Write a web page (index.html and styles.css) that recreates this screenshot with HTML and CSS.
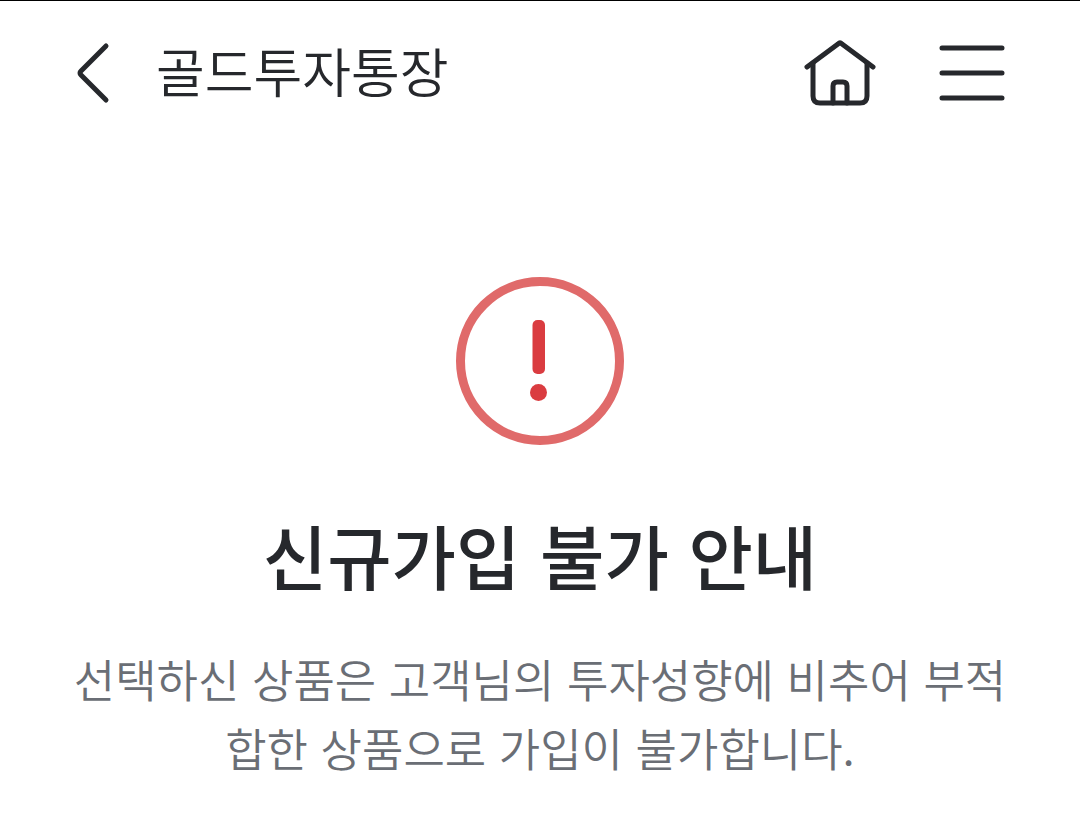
FILE: index.html
```html
<!DOCTYPE html>
<html lang="ko">
<head>
  <meta charset="UTF-8">
  <meta name="viewport" content="width=device-width, initial-scale=1.0">
  <title>골드투자통장</title>
  <link rel="stylesheet" href="styles.css">
</head>
<body>
  <!-- Top bar -->
  <header class="header">
    <button type="button" class="icon-btn back-btn" aria-label="이전">
      <svg width="32" height="60" viewBox="0 0 32 60"><path d="M30 3 L5 28 Q3 30 5 32 L30 57"/></svg>
    </button>
    <h1 class="header-title">골드투자통장</h1>
    <a href="#" class="icon-btn home-btn" aria-label="홈">
      <svg width="72" height="66" viewBox="0 0 72 66">
        <path d="M3 27 L34 4 Q36 2 38 4 L69 27"/>
        <path d="M9 23 V56 Q9 63 16 63 H56 Q63 63 63 56 V23"/>
        <path d="M29 63 V46 Q29 42 33 42 H39 Q43 42 43 46 V63"/>
      </svg>
    </a>
    <button type="button" class="icon-btn menu-btn" aria-label="전체 메뉴">
      <svg width="64" height="56" viewBox="0 0 64 56"><path d="M2 3 H62 M2 28 H62 M2 53 H62"/></svg>
    </button>
  </header>

  <!-- Notice -->
  <main class="notice">
    <svg class="notice-icon" width="168" height="168" viewBox="0 0 168 168" aria-hidden="true">
      <circle class="ring" cx="84" cy="84" r="79.5"/>
      <rect class="mark" x="76.5" y="43" width="12.5" height="54" rx="5"/>
      <circle class="mark" cx="82.5" cy="115.5" r="8.5"/>
    </svg>
    <h2 class="notice-title">신규가입 불가 안내</h2>
    <p class="notice-text">선택하신 상품은 고객님의 투자성향에 비추어 부적합한 상품으로 가입이 불가합니다.</p>
  </main>
</body>
</html>
```

FILE: styles.css
```css
* {
  box-sizing: border-box;
}

body {
  margin: 0;
  border-top: 1px solid #000;
  background-color: #fff;
  color: #26282c;
  font-family: "Noto Sans CJK KR", sans-serif;
}

/* Top bar */
.header {
  display: flex;
  align-items: center;
  padding: 32px 76px;
}

.icon-btn {
  display: block;
  padding: 0;
  border: none;
  background: none;
  cursor: pointer;
}

.icon-btn svg {
  display: block;
  overflow: visible;
  fill: none;
  stroke: #26282c;
  stroke-width: 5;
  stroke-linecap: round;
  stroke-linejoin: round;
}

.header-title {
  margin: 0 0 0 48px;
  padding-bottom: 6px;
  font-size: 53px;
  font-weight: 350;
  line-height: 74px;
}

.home-btn {
  margin-left: auto;
}

.menu-btn {
  margin-left: 64px;
}

/* Notice */
.notice {
  padding: 132px 72px 32px;
  text-align: center;
}

.notice-icon {
  display: block;
  margin: 0 auto;
}

.ring {
  fill: none;
  stroke: #e06a6a;
  stroke-width: 9;
}

.mark {
  fill: #da3c40;
}

.notice-title {
  margin: 60px 0 0;
  font-size: 70px;
  font-weight: 500;
  line-height: 100px;
}

.notice-text {
  margin: 39px 0 0;
  color: #6a6e75;
  font-size: 45px;
  font-weight: 350;
  line-height: 69px;
  word-break: break-all;
}
```
